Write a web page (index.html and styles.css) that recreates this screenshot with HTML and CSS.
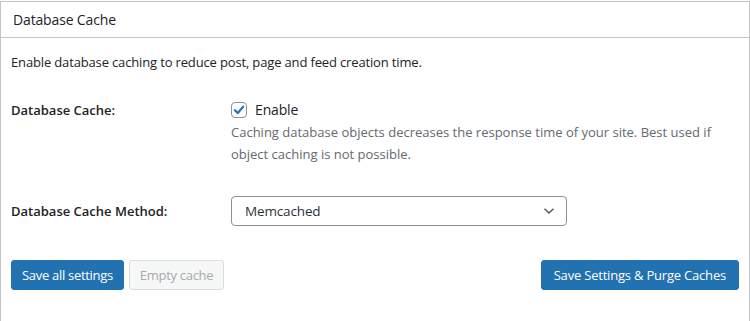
FILE: index.html
```html
<!DOCTYPE html>
<html>
<head>
<meta charset="utf-8">
<link rel="stylesheet" href="styles.css">
</head>
<body>
<div class="postbox">
  <div class="hndle"><h2 class="title">Database Cache</h2></div>
  <div class="inside">
    <p class="intro">Enable database caching to reduce post, page and feed creation time.</p>
    <div class="row row-cache">
      <div class="label">Database Cache:</div>
      <div class="field">
        <label class="check">
          <span class="box">
            <svg width="14" height="14" viewBox="0 0 14 14"><path d="M3 7.2 L5.8 10 L11.2 3.6" fill="none" stroke="#2271b1" stroke-width="2.2" stroke-linecap="round" stroke-linejoin="round"/></svg>
          </span>
          <span>Enable</span>
        </label>
        <p class="desc">Caching database objects decreases the response time of your site. Best used if object caching is not possible.</p>
      </div>
    </div>
    <div class="row row-method">
      <div class="label">Database Cache Method:</div>
      <div class="field">
        <div class="select">
          <span>Memcached</span>
          <svg width="12" height="8" viewBox="0 0 12 8"><path d="M1.5 1.8 L6 6 L10.5 1.8" fill="none" stroke="#50575e" stroke-width="1.4"/></svg>
        </div>
      </div>
    </div>
    <div class="actions">
      <div class="left">
        <button class="btn primary">Save all settings</button>
        <button class="btn disabled">Empty cache</button>
      </div>
      <button class="btn primary wide">Save Settings &amp; Purge Caches</button>
    </div>
  </div>
</div>
</body>
</html>
```
FILE: styles.css
```css
html, body {
  margin: 0;
  padding: 0;
  background: #fff;
}
body {
  font-family: "Open Sans", "Noto Sans", sans-serif;
  font-size: 13px;
  color: #1d2327;
  padding-top: 1px;
  letter-spacing: -0.15px;
}
.postbox {
  border: 1px solid #c3c4c7;
  height: 330px;
  box-sizing: border-box;
}
.hndle {
  height: 35px;
  border-bottom: 1px solid #c3c4c7;
  display: flex;
  align-items: center;
  padding-left: 12px;
}
.title {
  margin: 0;
  font-size: 14px;
  font-weight: 400;
  color: #1d2327;
}
.inside {
  padding: 0 10px 0 10px;
}
.intro {
  margin: 14px 0 0;
  line-height: 20px;
}
.row {
  display: flex;
}
.label {
  width: 220px;
  flex: none;
  font-weight: 600;
  font-size: 13px;
  letter-spacing: 0;
}
.row-cache {
  margin-top: 28px;
}
.row-cache .label {
  line-height: 20px;
}
.check {
  display: flex;
  align-items: center;
  gap: 8px;
  line-height: 20px;
  font-size: 14px;
}
.box {
  width: 14px;
  height: 14px;
  border: 1px solid #8c8f94;
  border-radius: 4px;
  display: flex;
  align-items: center;
  justify-content: center;
}
.desc {
  margin: 1px 0 0;
  color: #646970;
  line-height: 22px;
  font-size: 13px;
  letter-spacing: 0;
  width: 500px;
}
.row-method {
  margin-top: 31px;
  align-items: center;
}
.select {
  width: 336px;
  height: 30px;
  box-sizing: border-box;
  border: 1px solid #8c8f94;
  border-radius: 4px;
  display: flex;
  align-items: center;
  justify-content: space-between;
  padding: 0 11px 0 13px;
  font-size: 13.5px;
  color: #2c3338;
}
.actions {
  margin-top: 34px;
  display: flex;
  justify-content: space-between;
}
.left {
  display: flex;
  gap: 5px;
}
.btn {
  font-family: inherit;
  font-size: 13px;
  letter-spacing: -0.3px;
  height: 30px;
  padding: 0 10px;
  border-radius: 3px;
  border: 1px solid #2271b1;
  line-height: 28px;
}
.btn.wide {
  padding: 0 12px;
  letter-spacing: -0.2px;
}
.btn.primary {
  background: #2271b1;
  color: #fff;
}
.btn.disabled {
  background: #f6f7f7;
  border-color: #dcdcde;
  color: #a7aaad;
}
```
